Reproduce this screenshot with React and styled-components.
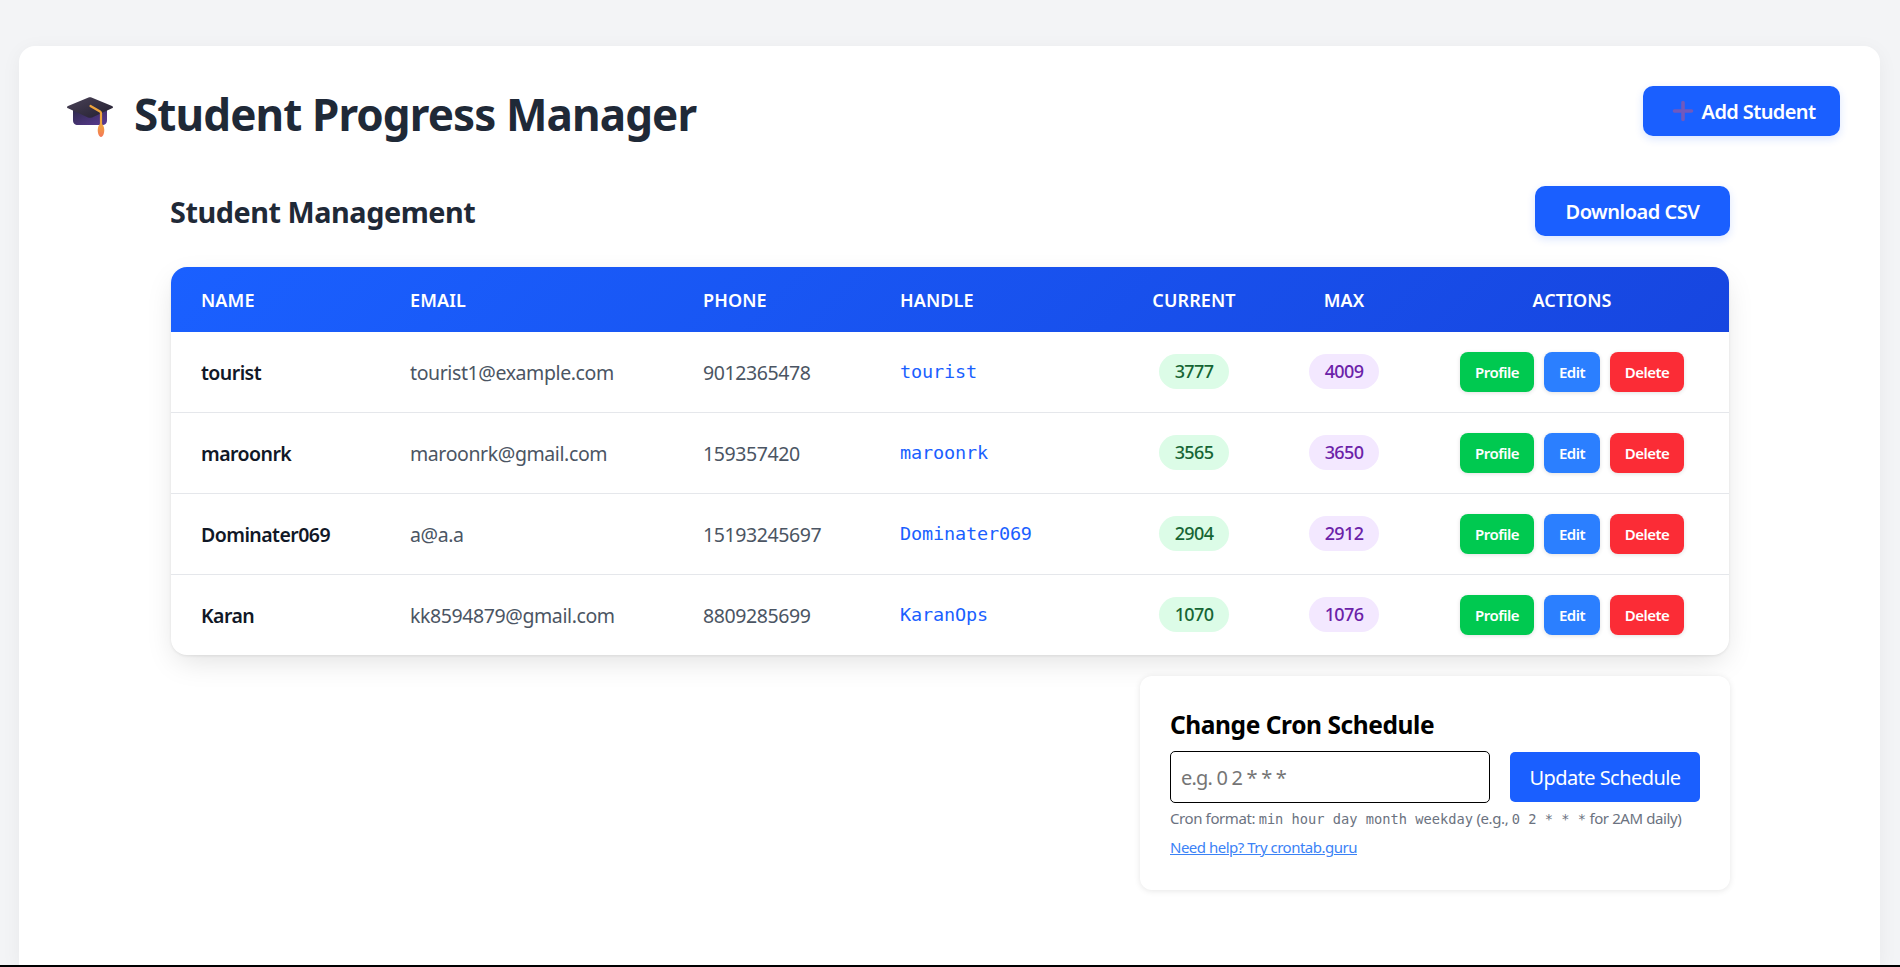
import React from 'react';
import styled, { createGlobalStyle } from 'styled-components';

const students = [
    { name: 'tourist', email: 'tourist1@example.com', phone: '9012365478', handle: 'tourist', current: 3777, max: 4009 },
    { name: 'maroonrk', email: 'maroonrk@gmail.com', phone: '159357420', handle: 'maroonrk', current: 3565, max: 3650 },
    { name: 'Dominater069', email: 'a@a.a', phone: '15193245697', handle: 'Dominater069', current: 2904, max: 2912 },
    { name: 'Karan', email: 'kk8594879@gmail.com', phone: '8809285699', handle: 'KaranOps', current: 1070, max: 1076 },
];

const GlobalStyle = createGlobalStyle`
    html, body {
        margin: 0;
        padding: 0;
        background: #f3f4f6;
        font-family: "Noto Sans", "Open Sans", sans-serif;
    }
    * {
        box-sizing: border-box;
    }
`;

const Page = styled.div`
    height: 967px;
    overflow: hidden;
    padding: 46px 20px 0 19px;
    border-bottom: 2px solid #000;
`;

const Card = styled.main`
    height: 100%;
    background: #fff;
    border-radius: 16px 16px 0 0;
    box-shadow: 0 4px 20px rgba(0, 0, 0, .05);
    padding: 40px 40px 0 48px;
`;

const Header = styled.header`
    display: flex;
    justify-content: space-between;
    height: 50px;
`;

const Title = styled.h1`
    display: flex;
    align-items: center;
    gap: 21px;
    margin: 0;
    height: 56px;
    color: #1f2937;
    font-size: 44px;
    font-weight: 700;
    letter-spacing: -.9px;
    line-height: 56px;
`;

const Hat = styled.svg`
    margin-top: 6px;
`;

const Button = styled.button`
    display: inline-flex;
    align-items: center;
    justify-content: center;
    gap: 7px;
    height: 50px;
    width: ${p => p.$width};
    padding: 0;
    border: 0;
    border-radius: 10px;
    background: #1a5fff;
    color: #fff;
    font: 600 20px "Noto Sans", sans-serif;
    letter-spacing: -.48px;
    box-shadow: 0 3px 8px rgba(26, 95, 255, .16);
`;

const AddButton = styled(Button)`
    padding-left: 3px;
    letter-spacing: -.62px;
`;

const Section = styled.section`
    width: 1560px;
    margin: 50px 0 0 103px;
`;

const SectionHead = styled.div`
    display: flex;
    justify-content: space-between;
    align-items: center;
`;

const SectionTitle = styled.h2`
    margin: 0;
    color: #1f2937;
    font-size: 28.8px;
    font-weight: 700;
    letter-spacing: -.45px;
`;

const TableWrap = styled.div`
    margin: 31px 1px 0;
    border-radius: 16px;
    overflow: hidden;
    box-shadow: 0 10px 30px -5px rgba(0, 0, 0, .13), 0 1px 3px rgba(0, 0, 0, .08);
`;

const Table = styled.table`
    width: 1558px;
    table-layout: fixed;
    border-collapse: collapse;
`;

const HeadRow = styled.tr`
    height: 65px;
    background: linear-gradient(135deg, #1a60ff 0%, #1746e0 100%);
`;

const Th = styled.th`
    padding: 0 0 0 ${p => (p.$center ? 0 : '30px')};
    color: #fff;
    font-size: 18px;
    font-weight: 600;
    letter-spacing: .1px;
    text-align: ${p => (p.$center ? 'center' : 'left')};
`;

const ActionsTh = styled(Th)`
    padding-left: 2px;
`;

const Row = styled.tr`
    height: 81px;
    border-top: 1px solid #e5e7eb;
    &:first-child {
        border-top: 0;
        height: 80px;
    }
`;

const Td = styled.td`
    padding: ${p => (p.$center ? 0 : '2px 0 0 30px')};
    color: #4b5563;
    font-size: 19.5px;
    letter-spacing: -.4px;
    text-align: ${p => (p.$center ? 'center' : 'left')};
`;

const NameCell = styled(Td)`
    color: #111827;
    font-weight: 600;
    letter-spacing: -.55px;
`;

const Handle = styled.span`
    color: #1a5fff;
    font-family: "DejaVu Sans Mono", monospace;
    font-size: 18.5px;
    letter-spacing: -.15px;
    position: relative;
    top: -2px;
`;

const Badge = styled.span`
    display: inline-block;
    height: 35px;
    padding: 0 16px;
    border-radius: 18px;
    background: ${p => (p.$kind === 'max' ? '#f3e8ff' : '#dcfce7')};
    color: ${p => (p.$kind === 'max' ? '#6b21a8' : '#166534')};
    font-size: 18px;
    font-weight: 500;
    line-height: 35px;
    letter-spacing: -.65px;
`;

const Actions = styled.div`
    display: flex;
    justify-content: center;
    gap: 10px;
    margin-left: 2px;
`;

const ActionButton = styled.button`
    width: ${p => (p.$kind === 'edit' ? '56px' : '74px')};
    height: 40px;
    padding: 0;
    border: 0;
    border-radius: 8px;
    background: ${p => ({ profile: '#00c950', edit: '#2b7fff', delete: '#fb2c36' })[p.$kind]};
    color: #fff;
    font: 600 15px "Noto Sans", sans-serif;
    letter-spacing: -.5px;
    box-shadow: 0 1px 4px rgba(0, 0, 0, .12);
`;

const CronRow = styled.div`
    display: flex;
    justify-content: flex-end;
    padding-top: 21px;
`;

const CronCard = styled.div`
    width: 590px;
    height: 214px;
    padding: 30px 30px 0;
    border-radius: 12px;
    background: #fff;
    box-shadow: 0 1px 6px rgba(0, 0, 0, .1);
`;

const CronTitle = styled.h3`
    margin: 0;
    color: #000;
    font-size: 24.5px;
    font-weight: 700;
    line-height: 38px;
    letter-spacing: -.42px;
`;

const CronForm = styled.div`
    display: flex;
    align-items: center;
    justify-content: space-between;
    margin-top: 7px;
`;

const CronInput = styled.input`
    width: 320px;
    height: 52px;
    padding: 0 10px;
    border: 1.5px solid #000;
    border-radius: 5px;
    font: 20px "Noto Sans", sans-serif;
    letter-spacing: -.8px;
    &::placeholder {
        color: #757575;
    }
`;

const CronButton = styled.button`
    width: 190px;
    height: 50px;
    padding: 0;
    border: 0;
    border-radius: 5px;
    background: #1a5fff;
    color: #fff;
    font: 20px "Noto Sans", sans-serif;
    letter-spacing: -.55px;
`;

const Hint = styled.p`
    margin: 5px 0 0;
    color: #6b7280;
    font-size: 15px;
    line-height: 20px;
    letter-spacing: -.4px;
    white-space: nowrap;
    code {
        font-family: "DejaVu Sans Mono", monospace;
        font-size: 13.7px;
        letter-spacing: 0;
    }
`;

const HelpLink = styled.a`
    display: inline-block;
    margin-top: 8px;
    color: #3b82f6;
    font-size: 15px;
    letter-spacing: -.5px;
    text-decoration: underline;
`;

const HatIcon = () => (
    <Hat width="46" height="40" viewBox="0 0 46 40" aria-hidden="true">
        <defs>
            <linearGradient id="hatBody" x1="0" y1="0" x2="1" y2="1">
                <stop offset="0" stopColor="#2d2a4a" />
                <stop offset="1" stopColor="#5b3a94" />
            </linearGradient>
            <linearGradient id="hatTop" x1="0" y1="0" x2="1" y2="1">
                <stop offset="0" stopColor="#4a4257" />
                <stop offset="1" stopColor="#231f30" />
            </linearGradient>
            <linearGradient id="hatTassel" x1="0" y1="0" x2="0" y2="1">
                <stop offset="0" stopColor="#f0a63a" />
                <stop offset="1" stopColor="#f4775a" />
            </linearGradient>
        </defs>
        <path d="M6 12v11c0 3.500 1.500 5 5 5h24c3.500 0 5-1.500 5-5V12z" fill="url(#hatBody)" />
        <path d="M1 9 21.500.6c1-.4 2-.4 3 0L45 9c1.300.5 1.300 1.800 0 2.300L25 20.400c-1.300.6-2.700.6-4 0L1 11.300c-1.300-.5-1.300-1.800 0-2.300z" fill="url(#hatTop)" />
        <path d="M23.500 9 33 14.500c.6.400 1 .9 1 1.600V29" fill="none" stroke="#eea43c" strokeWidth="2.200" strokeLinecap="round" />
        <path d="M34 27c2 0 2.800 2 3.200 5 .4 4-1.200 8-3.200 8s-3.600-4-3.200-8c.4-3 1.200-5 3.200-5z" fill="url(#hatTassel)" />
    </Hat>
);

const PlusIcon = () => (
    <svg width="24" height="24" viewBox="0 0 24 24" aria-hidden="true">
        <path d="M12 3.500v17M3.500 12h17" stroke="#7159bd" strokeWidth="3.600" strokeLinecap="round" />
    </svg>
);

const App = () => (
    <>
        <GlobalStyle />
        <Page>
            <Card>
                <Header>
                    <Title><HatIcon />Student Progress Manager</Title>
                    <AddButton $width="197px"><PlusIcon />Add Student</AddButton>
                </Header>
                <Section>
                    <SectionHead>
                        <SectionTitle>Student Management</SectionTitle>
                        <Button $width="195px">Download CSV</Button>
                    </SectionHead>
                    <TableWrap>
                        <Table>
                            <colgroup>
                                <col width="209" />
                                <col width="293" />
                                <col width="197" />
                                <col width="243" />
                                <col width="162" />
                                <col width="138" />
                                <col width="316" />
                            </colgroup>
                            <thead>
                                <HeadRow>
                                    <Th>NAME</Th>
                                    <Th>EMAIL</Th>
                                    <Th>PHONE</Th>
                                    <Th>HANDLE</Th>
                                    <Th $center>CURRENT</Th>
                                    <Th $center>MAX</Th>
                                    <ActionsTh $center>ACTIONS</ActionsTh>
                                </HeadRow>
                            </thead>
                            <tbody>
                                {students.map(s => (
                                    <Row key={s.name}>
                                        <NameCell>{s.name}</NameCell>
                                        <Td>{s.email}</Td>
                                        <Td>{s.phone}</Td>
                                        <Td><Handle>{s.handle}</Handle></Td>
                                        <Td $center><Badge>{s.current}</Badge></Td>
                                        <Td $center><Badge $kind="max">{s.max}</Badge></Td>
                                        <Td $center>
                                            <Actions>
                                                <ActionButton $kind="profile">Profile</ActionButton>
                                                <ActionButton $kind="edit">Edit</ActionButton>
                                                <ActionButton $kind="delete">Delete</ActionButton>
                                            </Actions>
                                        </Td>
                                    </Row>
                                ))}
                            </tbody>
                        </Table>
                    </TableWrap>
                    <CronRow>
                        <CronCard>
                            <CronTitle>Change Cron Schedule</CronTitle>
                            <CronForm>
                                <CronInput placeholder="e.g. 0 2 * * *" />
                                <CronButton>Update Schedule</CronButton>
                            </CronForm>
                            <Hint>Cron format: <code>min hour day month weekday</code> (e.g., <code>0 2 * * *</code> for 2AM daily)</Hint>
                            <HelpLink href="#">Need help? Try crontab.guru</HelpLink>
                        </CronCard>
                    </CronRow>
                </Section>
            </Card>
        </Page>
    </>
);

export default App;
